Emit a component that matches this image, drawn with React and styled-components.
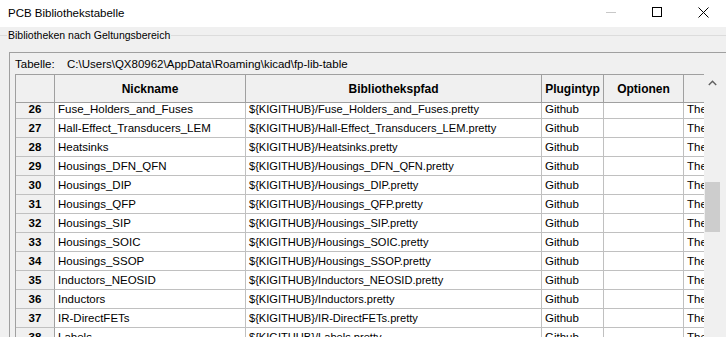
import styled, { createGlobalStyle } from "styled-components";

const GlobalStyle = createGlobalStyle`
html, body {
  margin: 0;
  padding: 0;
  height: 337px;
  overflow: hidden;
  background: #F0F0F0;
  font-family: "Liberation Sans", Arial, sans-serif;
  font-size: 11.5px;
  color: #000000;
}
`;

const libs = [
  [26, "Fuse_Holders_and_Fuses"],
  [27, "Hall-Effect_Transducers_LEM"],
  [28, "Heatsinks"],
  [29, "Housings_DFN_QFN"],
  [30, "Housings_DIP"],
  [31, "Housings_QFP"],
  [32, "Housings_SIP"],
  [33, "Housings_SOIC"],
  [34, "Housings_SSOP"],
  [35, "Inductors_NEOSID"],
  [36, "Inductors"],
  [37, "IR-DirectFETs"],
  [38, "Labels"],
];

export default function App() {
  return (
    <Window>
      <GlobalStyle />
      <TitleBar>
        <Title>PCB Bibliothekstabelle</Title>
        <Controls>
          <CtrlButton>
            <svg width="10" height="10" viewBox="0 0 10 10">
              <line x1="0" y1="5.5" x2="10" y2="5.5" stroke="#C8C8C8" strokeWidth="1" />
            </svg>
          </CtrlButton>
          <CtrlButton>
            <svg width="10" height="10" viewBox="0 0 10 10">
              <rect x="0.5" y="0.5" width="9" height="9" fill="none" stroke="#000" strokeWidth="1" />
            </svg>
          </CtrlButton>
          <CtrlButton>
            <svg width="11" height="11" viewBox="0 0 11 11">
              <path d="M0.5 0.5 L10.5 10.5 M10.5 0.5 L0.5 10.5" stroke="#000" strokeWidth="1" />
            </svg>
          </CtrlButton>
        </Controls>
      </TitleBar>

      <GroupHeader>
        <GroupStub />
        <GroupLabel>Bibliotheken nach Geltungsbereich</GroupLabel>
        <GroupLine />
      </GroupHeader>

      <Panel>
        <TableRow>
          <PathLabel>Tabelle:</PathLabel>
          <span>C:\Users\QX80962\AppData\Roaming\kicad\fp-lib-table</span>
        </TableRow>

        <GridArea>
          <Grid>
            <Row head>
              <HeadCell />
              <HeadCell>Nickname</HeadCell>
              <HeadCell>Bibliothekspfad</HeadCell>
              <HeadCell>Plugintyp</HeadCell>
              <HeadCell>Optionen</HeadCell>
              <HeadCell />
            </Row>
            <Scroller>
              <ScrollInner>
                {libs.map(([num, name]) => (
                  <Row key={num}>
                    <NumCell>{num}</NumCell>
                    <Cell>{name}</Cell>
                    <Cell narrow>{"${KIGITHUB}/" + name + ".pretty"}</Cell>
                    <Cell>Github</Cell>
                    <Cell />
                    <Cell>The</Cell>
                  </Row>
                ))}
              </ScrollInner>
            </Scroller>
          </Grid>
          <Scrollbar>
            <ArrowButton>
              <svg width="9" height="6" viewBox="0 0 9 6">
                <path d="M0.8 5 L4.5 1.3 L8.2 5" fill="none" stroke="#606060" strokeWidth="1.4" />
              </svg>
            </ArrowButton>
            <Thumb />
          </Scrollbar>
        </GridArea>
      </Panel>
    </Window>
  );
}

const Window = styled.div`
width: 726px;
height: 337px;
overflow: hidden;
display: flex;
flex-direction: column;
`;

const TitleBar = styled.div`
height: 27px;
background: #FFFFFF;
display: flex;
align-items: center;
justify-content: space-between;
flex-shrink: 0;
`;

const Title = styled.div`
font-size: 11.5px;
padding-left: 8px;
margin-top: -2px;
`;

const Controls = styled.div`
display: flex;
align-self: stretch;
`;

const CtrlButton = styled.div`
width: 46px;
display: flex;
align-items: center;
justify-content: center;
margin-top: -3px;
`;

const GroupHeader = styled.div`
display: flex;
align-items: center;
height: 14px;
margin-top: 1px;
flex-shrink: 0;
`;

const GroupStub = styled.div`
width: 7px;
border-top: 1px solid #DCDCDC;
`;

const GroupLabel = styled.div`
padding: 0 1px;
white-space: nowrap;
font-size: 10.5px;
`;

const GroupLine = styled.div`
flex: 1;
border-top: 1px solid #DCDCDC;
`;

const Panel = styled.div`
margin: 10px 0 0 9px;
border-top: 1px solid #A0A0A0;
border-left: 1px solid #A0A0A0;
padding-left: 5px;
flex: 1;
display: flex;
flex-direction: column;
min-height: 0;
`;

const TableRow = styled.div`
height: 21px;
display: flex;
align-items: center;
white-space: nowrap;
flex-shrink: 0;
`;

const PathLabel = styled.span`
width: 52px;
`;

const GridArea = styled.div`
display: flex;
flex: 1;
min-height: 0;
`;

const Grid = styled.div`
width: 689px;
box-sizing: border-box;
border-top: 1px solid #A0A0A0;
border-left: 1px solid #A0A0A0;
overflow: hidden;
display: flex;
flex-direction: column;
flex-shrink: 0;
`;

const Row = styled.div`
display: grid;
grid-template-columns: 39px 191px 296px 62px 80px 300px;
height: ${props => props.head ? "28px" : "19px"};
flex-shrink: 0;
`;

const Cell = styled.div`
box-sizing: border-box;
background: #FFFFFF;
border-right: 1px solid #C0C0C0;
border-bottom: 1px solid #C0C0C0;
padding: 0 3px;
display: flex;
align-items: center;
white-space: nowrap;
overflow: hidden;
font-size: ${props => props.narrow ? "11.1px" : "11.5px"};
`;

const HeadCell = styled(Cell)`
background: #F0F0F0;
border-color: #A0A0A0;
font-weight: bold;
font-size: 12px;
justify-content: center;
`;

const NumCell = styled(Cell)`
background: #F0F0F0;
border-right-color: #A0A0A0;
font-weight: bold;
justify-content: center;
`;

const Scroller = styled.div`
flex: 1;
overflow: hidden;
`;

const ScrollInner = styled.div`
margin-top: -3px;
display: flex;
flex-direction: column;
`;

const Scrollbar = styled.div`
width: 17px;
background: #F0F0F0;
display: flex;
flex-direction: column;
align-items: center;
flex-shrink: 0;
`;

const ArrowButton = styled.div`
height: 17px;
width: 17px;
display: flex;
align-items: center;
justify-content: center;
`;

const Thumb = styled.div`
margin-top: 91px;
width: 15px;
height: 50px;
background: #CDCDCD;
`;
